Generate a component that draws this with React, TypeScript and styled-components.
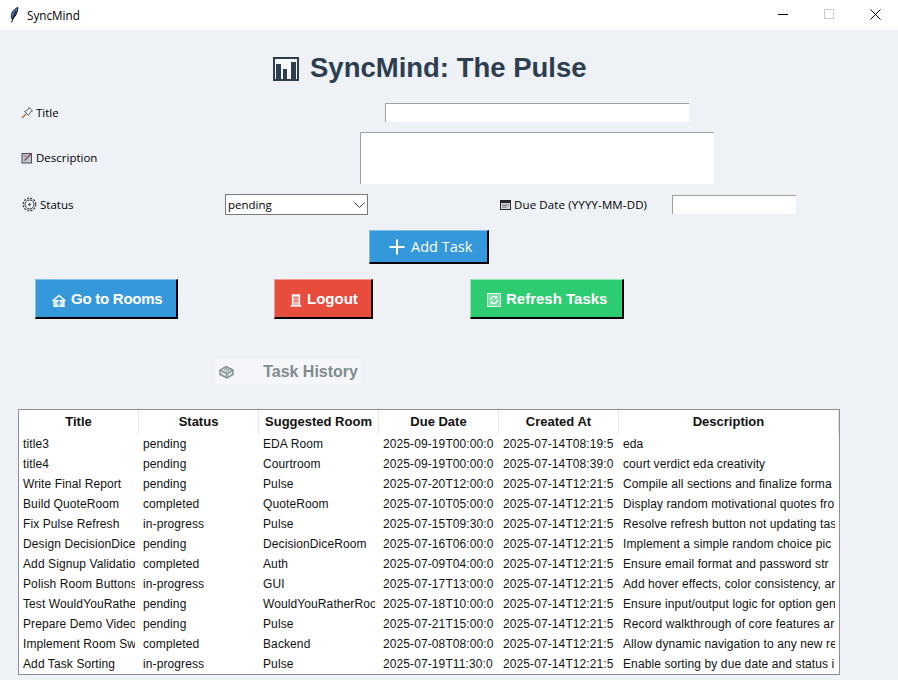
import React from 'react';
import styled, { createGlobalStyle } from 'styled-components';

const GlobalStyle = createGlobalStyle`
  html, body {
    margin: 0;
    padding: 0;
    background: #eef1f6;
    overflow: hidden;
  }
  * {
    box-sizing: border-box;
  }
`;

const Window = styled.div`
  width: 898px;
  height: 680px;
  display: flex;
  flex-direction: column;
  overflow: hidden;
  background: #eef1f6;
  font-family: 'Open Sans', 'Noto Sans', sans-serif;
  color: #000;
`;

const TitleBar = styled.div`
  height: 30px;
  flex: none;
  display: flex;
  align-items: center;
  background: #fff;
  padding-left: 10px;
`;

const AppName = styled.span`
  margin-left: 8px;
  font-size: 11.7px;
`;

const WindowButtons = styled.div`
  margin-left: auto;
  display: flex;
  height: 30px;
  padding-bottom: 2px;
`;

const WindowButton = styled.div`
  width: 46px;
  display: flex;
  align-items: center;
  justify-content: center;
`;

const Header = styled.h1`
  height: 73px;
  margin: 0;
  padding: 3px 0 0 273px;
  display: flex;
  align-items: center;
  gap: 11px;
  font-family: 'Liberation Sans', Arial, sans-serif;
  font-size: 27.5px;
  font-weight: 700;
  color: #2c3e50;
`;

const FormRow = styled.div<{ $height: number; $gap: number }>`
  display: flex;
  align-items: center;
  height: ${p => p.$height}px;
  margin-bottom: ${p => p.$gap}px;
`;

const Label = styled.label<{ $width: number; $left?: number; $gap?: number; $spread?: boolean; $lift?: boolean }>`
  display: flex;
  align-items: center;
  gap: ${p => p.$gap ?? 2}px;
  flex: none;
  width: ${p => p.$width}px;
  margin-left: ${p => p.$left ?? 0}px;
  margin-bottom: ${p => (p.$lift ? 2 : 0)}px;
  font-size: 11.5px;
  letter-spacing: ${p => (p.$spread ? '0.13px' : '0')};
  white-space: nowrap;
`;

const TextInput = styled.input<{ $width: number; $height: number }>`
  flex: none;
  width: ${p => p.$width}px;
  height: ${p => p.$height}px;
  padding: 0 2px;
  background: #fff;
  border: 0;
  border-top: 1px solid #a0a0a0;
  border-left: 1px solid #a0a0a0;
  border-radius: 0;
  outline: none;
`;

const TextArea = styled.textarea`
  flex: none;
  width: 354px;
  height: 52px;
  padding: 0 2px;
  background: #fff;
  border: 0;
  border-top: 1px solid #a0a0a0;
  border-left: 1px solid #a0a0a0;
  border-radius: 0;
  outline: none;
  resize: none;
`;

const SelectWrap = styled.div`
  position: relative;
  flex: none;
  width: 143px;
  height: 21px;
`;

const Select = styled.select`
  display: block;
  width: 100%;
  height: 100%;
  padding: 0 0 0 2px;
  appearance: none;
  background: #fff;
  border: 1px solid #7a7a7a;
  border-radius: 0;
  font-family: 'Open Sans', sans-serif;
  font-size: 11.5px;
  color: #000;
  outline: none;
`;

const Chevron = styled.svg`
  position: absolute;
  right: 3px;
  top: 8px;
`;

const ButtonRow = styled.div<{ $gap: number }>`
  display: flex;
  align-items: flex-start;
  margin-bottom: ${p => p.$gap}px;
`;

const tones = {
  blue: { fill: '#3498db', light: '#7cc0ef' },
  red: { fill: '#e74c3c', light: '#f59a90' },
  green: { fill: '#2ecc71', light: '#8beeb5' },
};

const ActionButton = styled.button<{
  $tone: keyof typeof tones;
  $width: number;
  $left: number;
  $pad: number;
  $tight?: boolean;
}>`
  flex: none;
  display: flex;
  align-items: center;
  gap: 5px;
  width: ${p => p.$width}px;
  height: 40px;
  margin-left: ${p => p.$left}px;
  padding: 0 0 0 ${p => p.$pad}px;
  background: ${p => tones[p.$tone].fill};
  border-style: solid;
  border-width: 1px 2px 2px 1px;
  border-color: ${p => tones[p.$tone].light} #000 #000 ${p => tones[p.$tone].light};
  border-radius: 0;
  color: #fff;
  font-family: 'Liberation Sans', Arial, sans-serif;
  font-size: 15px;
  font-weight: 700;
  letter-spacing: ${p => (p.$tight ? '-0.25px' : '0')};
  white-space: nowrap;

  svg {
    margin-top: 3px;
  }
`;

const AddButton = styled(ActionButton)`
  height: 34px;
  gap: 6px;
  font-family: 'Open Sans', sans-serif;
  font-size: 14.5px;
  font-weight: 400;

  svg {
    margin-top: 0;
  }
`;

const HistoryLabel = styled.div`
  display: flex;
  align-items: center;
  justify-content: space-between;
  width: 146px;
  height: 25px;
  margin: 0 0 25px 215px;
  padding: 0 3px 0 4px;
  background: #f4f6fa;
  font-family: 'Liberation Sans', Arial, sans-serif;
  font-size: 16px;
  font-weight: 700;
  color: #7f8c8d;
`;

const Table = styled.div`
  width: 822px;
  height: 266px;
  margin-left: 18px;
  background: #fff;
  border: 1px solid #8c9096;
  font-family: 'Liberation Sans', Arial, sans-serif;
  overflow: hidden;
`;

const TableRow = styled.div<{ $head?: boolean }>`
  display: grid;
  grid-template-columns: repeat(5, 120px) 1fr;
  height: ${p => (p.$head ? 24 : 20)}px;
  align-items: center;
`;

const HeadCell = styled.div`
  height: 24px;
  line-height: 24px;
  text-align: center;
  font-size: 13px;
  font-weight: 700;
  white-space: nowrap;
  border-right: 1px solid #e6e6e6;
  color: #111;
`;

const Cell = styled.div`
  margin: 0 4px;
  font-size: 12px;
  line-height: 20px;
  letter-spacing: 0.1px;
  white-space: nowrap;
  overflow: hidden;
  color: #111;
`;

const PinIcon = () => (
  <svg width="13" height="13" viewBox="0 0 13 13" fill="none">
    <path d="M8 1.500 11.500 5 10 5.500 8 8.500 7.500 9.500 3.500 5.500 5 5 7.500 3Z" stroke="#59606b" strokeWidth="1" />
    <path d="M5 8 1 12" stroke="#a8663c" strokeWidth="1.100" />
  </svg>
);

const MemoIcon = () => (
  <svg width="13" height="13" viewBox="0 0 13 13" fill="none">
    <rect x="1" y="2.500" width="9.500" height="9.500" fill="#c6c3cc" stroke="#4c4c58" />
    <path d="M3.500 9.500 10 3" stroke="#7a4f62" strokeWidth="1.500" />
    <path d="M2.500 5h3" stroke="#77757f" />
  </svg>
);

const GearIcon = () => (
  <svg width="15" height="15" viewBox="0 0 15 15" fill="none">
    <circle cx="7.500" cy="7.500" r="4.500" stroke="#3b4048" strokeWidth="1" />
    <circle cx="7.500" cy="7.500" r="6.300" stroke="#3b4048" strokeWidth="1.300" strokeDasharray="2 1.300" />
    <circle cx="7.500" cy="7.500" r="1.200" fill="#3b4048" />
  </svg>
);

const CalendarIcon = () => (
  <svg width="11" height="11" viewBox="0 0 11 11" fill="none">
    <rect x="0.500" y="1.500" width="10" height="9" fill="#d8d8d8" stroke="#26272b" />
    <rect x="1" y="2" width="9" height="2" fill="#26272b" />
    <path d="M2 6h7M2 8h5" stroke="#6b6d74" />
  </svg>
);

const ChartIcon = () => (
  <svg width="26" height="25" viewBox="0 0 26 25" fill="none">
    <rect x="1" y="2" width="24" height="22" fill="#f7f9fb" stroke="#2c3e50" strokeWidth="2" />
    <rect x="3" y="8" width="5" height="16" fill="#2c3e50" />
    <rect x="10" y="13" width="4" height="11" fill="#2c3e50" />
    <rect x="18" y="6" width="5" height="18" fill="#2c3e50" />
  </svg>
);

const FeatherIcon = () => (
  <svg width="9" height="16" viewBox="0 0 9 16" fill="none">
    <path d="M8 0.500C4.500 1.500 1.500 5 1.300 9c-.1 1.500.2 2.500.7 3C5.500 10 7.500 6 8 0.500Z" fill="#4a78b5" stroke="#0b0b0b" strokeWidth="0.900" />
    <path d="M6 4 1.500 15.500" stroke="#000" strokeWidth="1" />
  </svg>
);

const HouseIcon = () => (
  <svg width="14" height="13" viewBox="0 0 14 13" fill="none">
    <path d="M0.500 7 7 1.500 13.500 7" stroke="#fff" strokeWidth="1.600" />
    <rect x="2" y="6.500" width="10" height="6" fill="#cfe6f7" stroke="#fff" strokeWidth="1.200" />
    <path d="M7 6v6.500M5 9h4" stroke="#3498db" strokeWidth="1" />
  </svg>
);

const DoorIcon = () => (
  <svg width="12" height="14" viewBox="0 0 12 14" fill="none">
    <path d="M2.500 12.500V2h7v10.500" fill="#f5b7b1" stroke="#fff" strokeWidth="1.300" />
    <path d="M0.500 13h11" stroke="#fff" strokeWidth="1.400" />
    <path d="M4 5h4M4 8h4" stroke="#e74c3c" strokeWidth="1" />
  </svg>
);

const RefreshIcon = () => (
  <svg width="14" height="14" viewBox="0 0 14 14" fill="none">
    <rect x="0.500" y="0.500" width="13" height="13" fill="#7fdca6" stroke="#e2f9ec" />
    <path d="M3.500 7a3.500 3.500 0 0 1 6-2.400M10.500 7a3.500 3.500 0 0 1-6 2.400" stroke="#fff" strokeWidth="1.200" />
    <path d="M9.800 3v2.200H7.600M4.200 11V8.800h2.200" stroke="#fff" strokeWidth="1" />
  </svg>
);

const BookIcon = () => (
  <svg width="15" height="14" viewBox="0 0 15 14" fill="none">
    <path d="M1 5 7 1.500 14 5 14 9.500 8 13 1 9.500Z" fill="#d5dce0" stroke="#7f8c8d" strokeWidth="1.400" />
    <path d="M1 5 8 8.500 14 5M8 8.500V13" stroke="#7f8c8d" strokeWidth="1.300" />
    <path d="M5 4.500 8 3M7 6 10 4.500" stroke="#7f8c8d" strokeWidth="1" />
  </svg>
);

const columns = ['Title', 'Status', 'Suggested Room', 'Due Date', 'Created At', 'Description'];

const tasks = [
  ['title3', 'pending', 'EDA Room', '2025-09-19T00:00:0', '2025-07-14T08:19:5', 'eda'],
  ['title4', 'pending', 'Courtroom', '2025-09-19T00:00:0', '2025-07-14T08:39:0', 'court verdict eda creativity'],
  ['Write Final Report', 'pending', 'Pulse', '2025-07-20T12:00:0', '2025-07-14T12:21:5', 'Compile all sections and finalize forma'],
  ['Build QuoteRoom', 'completed', 'QuoteRoom', '2025-07-10T05:00:0', '2025-07-14T12:21:5', 'Display random motivational quotes fro'],
  ['Fix Pulse Refresh', 'in-progress', 'Pulse', '2025-07-15T09:30:0', '2025-07-14T12:21:5', 'Resolve refresh button not updating tas'],
  ['Design DecisionDice', 'pending', 'DecisionDiceRoom', '2025-07-16T06:00:0', '2025-07-14T12:21:5', 'Implement a simple random choice pic'],
  ['Add Signup Validatio', 'completed', 'Auth', '2025-07-09T04:00:0', '2025-07-14T12:21:5', 'Ensure email format and password str'],
  ['Polish Room Buttons', 'in-progress', 'GUI', '2025-07-17T13:00:0', '2025-07-14T12:21:5', 'Add hover effects, color consistency, ar'],
  ['Test WouldYouRathe', 'pending', 'WouldYouRatherRoo', '2025-07-18T10:00:0', '2025-07-14T12:21:5', 'Ensure input/output logic for option gen'],
  ['Prepare Demo Video', 'pending', 'Pulse', '2025-07-21T15:00:0', '2025-07-14T12:21:5', 'Record walkthrough of core features ar'],
  ['Implement Room Sw', 'completed', 'Backend', '2025-07-08T08:00:0', '2025-07-14T12:21:5', 'Allow dynamic navigation to any new re'],
  ['Add Task Sorting', 'in-progress', 'Pulse', '2025-07-19T11:30:0', '2025-07-14T12:21:5', 'Enable sorting by due date and status i'],
];

function App() {
  return (
    <>
      <GlobalStyle />
      <Window>
        <TitleBar>
          <FeatherIcon />
          <AppName>SyncMind</AppName>
          <WindowButtons>
            <WindowButton>
              <svg width="10" height="10" viewBox="0 0 10 10">
                <path d="M0 5.500h10" stroke="#000" />
              </svg>
            </WindowButton>
            <WindowButton>
              <svg width="10" height="10" viewBox="0 0 10 10">
                <rect x="0.500" y="0.500" width="9" height="9" fill="none" stroke="#ccc" />
              </svg>
            </WindowButton>
            <WindowButton>
              <svg width="11" height="11" viewBox="0 0 11 11">
                <path d="M0.500 0.500l10 10M10.500 0.500l-10 10" stroke="#000" />
              </svg>
            </WindowButton>
          </WindowButtons>
        </TitleBar>

        <Header>
          <ChartIcon />
          SyncMind: The Pulse
        </Header>

        <FormRow $height={19} $gap={10}>
          <Label $width={364} $left={21}>
            <PinIcon />
            Title
          </Label>
          <TextInput $width={304} $height={19} />
        </FormRow>

        <FormRow $height={52} $gap={10}>
          <Label $width={339} $left={21} $lift>
            <MemoIcon />
            Description
          </Label>
          <TextArea />
        </FormRow>

        <FormRow $height={21} $gap={15}>
          <Label $width={203} $left={22} $gap={3}>
            <GearIcon />
            Status
          </Label>
          <SelectWrap>
            <Select defaultValue="pending">
              <option>pending</option>
              <option>in-progress</option>
              <option>completed</option>
            </Select>
            <Chevron width="11" height="7" viewBox="0 0 11 7" fill="none">
              <path d="M0.500 0.500 5.500 5.500 10.500 0.500" stroke="#333" strokeWidth="1" />
            </Chevron>
          </SelectWrap>
          <Label $width={172} $left={132} $gap={3} $spread>
            <CalendarIcon />
            Due Date (YYYY-MM-DD)
          </Label>
          <TextInput $width={124} $height={19} />
        </FormRow>

        <ButtonRow $gap={15}>
          <AddButton $tone="blue" $width={120} $left={369} $pad={19}>
            <svg width="16" height="16" viewBox="0 0 16 16">
              <path d="M8 0.500v15M0.500 8h15" stroke="#fff" strokeWidth="2" />
            </svg>
            Add Task
          </AddButton>
        </ButtonRow>

        <ButtonRow $gap={40}>
          <ActionButton $tone="blue" $width={143} $left={35} $pad={16} $tight>
            <HouseIcon />
            Go to Rooms
          </ActionButton>
          <ActionButton $tone="red" $width={99} $left={96} $pad={15}>
            <DoorIcon />
            Logout
          </ActionButton>
          <ActionButton $tone="green" $width={154} $left={97} $pad={16}>
            <RefreshIcon />
            Refresh Tasks
          </ActionButton>
        </ButtonRow>

        <HistoryLabel>
          <BookIcon />
          Task History
        </HistoryLabel>

        <Table>
          <TableRow $head>
            {columns.map(name => (
              <HeadCell key={name}>{name}</HeadCell>
            ))}
          </TableRow>
          {tasks.map(task => (
            <TableRow key={task[0]}>
              {task.map((value, i) => (
                <Cell key={i}>{value}</Cell>
              ))}
            </TableRow>
          ))}
        </Table>
      </Window>
    </>
  );
}

export default App;
